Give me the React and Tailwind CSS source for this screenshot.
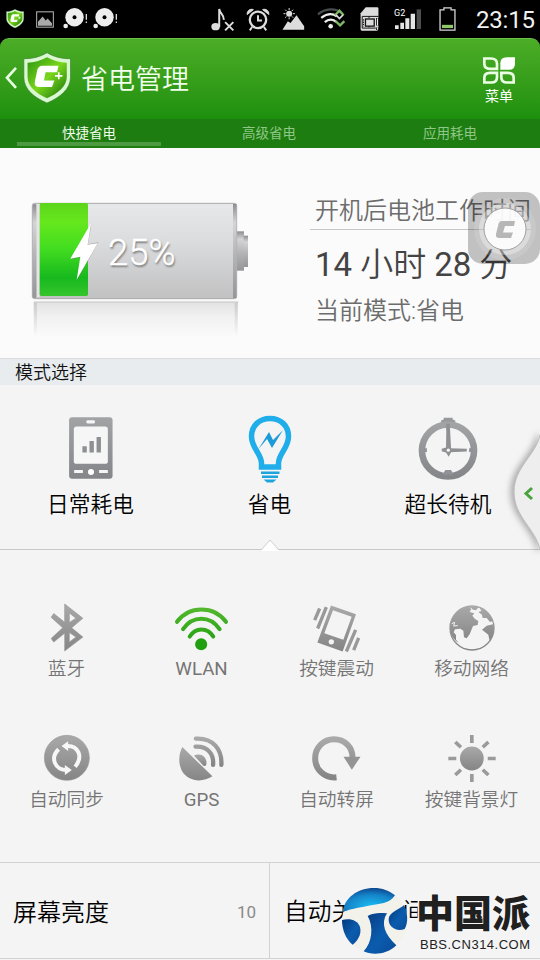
const cjk = "font-['Roboto','Noto_Sans_CJK_SC',sans-serif]";
const thin = "font-['Roboto','Noto_Sans_CJK_SC_DemiLight','Noto_Sans_CJK_SC_Light','Noto_Sans_CJK_SC',sans-serif] font-[350]";

// Every drawing keeps its own viewBox; size and spacing come from classes.
function Art({ box, className, children }) {
  return (
    <svg viewBox={box} className={`block shrink-0 overflow-visible ${className}`} fill="none">
      {children}
    </svg>
  );
}

function Gradients() {
  return (
    <svg className="absolute h-0 w-0">
      <defs>
        <linearGradient id="gray" x1="0" y1="0" x2="0" y2="1">
          <stop offset="0" stopColor="#a9a9a9" />
          <stop offset="1" stopColor="#858585" />
        </linearGradient>
        <linearGradient id="steel" x1="0" y1="0" x2="0" y2="1">
          <stop offset="0" stopColor="#a2a3a5" />
          <stop offset="1" stopColor="#85868a" />
        </linearGradient>
        <linearGradient id="shield" x1="0" y1="0" x2="1" y2="1">
          <stop offset="0" stopColor="#2c9410" />
          <stop offset="0.5" stopColor="#7ad61c" />
          <stop offset="1" stopColor="#146f0c" />
        </linearGradient>
        <linearGradient id="charge" x1="0" y1="0" x2="0" y2="1">
          <stop offset="0" stopColor="#5bd41a" />
          <stop offset="0.2" stopColor="#66e81d" />
          <stop offset="0.5" stopColor="#41dc20" />
          <stop offset="0.8" stopColor="#17b91e" />
          <stop offset="1" stopColor="#35c52c" />
        </linearGradient>
        <linearGradient id="case" x1="0" y1="0" x2="0" y2="1">
          <stop offset="0" stopColor="#e6e8ea" />
          <stop offset="0.4" stopColor="#dbdcde" />
          <stop offset="1" stopColor="#c1c1c1" />
        </linearGradient>
        <linearGradient id="rim" x1="0" y1="0" x2="0" y2="1">
          <stop offset="0" stopColor="#8e8c92" />
          <stop offset="0.2" stopColor="#d4d4d6" />
          <stop offset="0.55" stopColor="#b4b3b6" />
          <stop offset="1" stopColor="#969599" />
        </linearGradient>
        <linearGradient id="mirror" x1="0" y1="0" x2="0" y2="1">
          <stop offset="0" stopColor="#e2e2e2" />
          <stop offset="0.4" stopColor="#f1f1f1" />
          <stop offset="1" stopColor="#fbfbfb" />
        </linearGradient>
        <linearGradient id="edge" x1="0" y1="0" x2="0" y2="1">
          <stop offset="0" stopColor="#bdbdbd" stopOpacity="0.6" />
          <stop offset="1" stopColor="#bdbdbd" stopOpacity="0" />
        </linearGradient>
        <linearGradient id="wlan" gradientUnits="userSpaceOnUse" x1="0" y1="80" x2="0" y2="190">
          <stop offset="0" stopColor="#56b92f" />
          <stop offset="1" stopColor="#20a010" />
        </linearGradient>
        <radialGradient id="sky" cx="0.55" cy="0.75" r="0.8">
          <stop offset="0" stopColor="#19bdf2" />
          <stop offset="0.6" stopColor="#1583c8" />
          <stop offset="1" stopColor="#0a3d85" />
        </radialGradient>
        <linearGradient id="sea" x1="0" y1="0" x2="1" y2="1">
          <stop offset="0" stopColor="#06397e" />
          <stop offset="0.55" stopColor="#0b5cae" />
          <stop offset="1" stopColor="#0a4a98" />
        </linearGradient>
      </defs>
    </svg>
  );
}

function Shield({ className }) {
  return (
    <Art box="70 156 142 152" className={className}>
      <path d="M141 158C162 171 186 176 211 176V232C211 266 180 292 141 308C102 292 72 266 72 232V176C97 176 120 171 141 158Z" fill="#d9f8d1" stroke="#3c7f34" strokeWidth="2" />
      <path d="M141 172C160 183 180 187 200 188V230C200 258 174 280 141 294C108 280 83 258 83 230V188C103 187 122 183 141 172Z" fill="url(#shield)" />
      <path d="M175 197H127C119 197 114 202 112 210L105 244C103 254 107 260 116 260H156L163 241H132L137 216H171Z" fill="#fff" />
      <path d="M176 216V237M165 227H187" stroke="#fff" strokeWidth="5" />
    </Art>
  );
}

function Disc({ className }) {
  return (
    <Art box="188 24 74 64" className={className}>
      <circle cx="222" cy="52" r="28" fill="#eee" />
      <circle cx="222" cy="52" r="6" fill="#000" />
      <circle cx="195" cy="79" r="7" fill="#eee" />
      <path d="M258 42V60M258 65V70" stroke="#ddd" strokeWidth="4" />
    </Art>
  );
}

function StatusBar() {
  return (
    <div className="flex h-[38px] items-start bg-black text-white">
      <Shield className="mt-[9px] ml-[6px] h-[19px] w-[18px]" />
      <Art box="108 32 54 50" className="mt-[11px] ml-[12px] h-[17px] w-[18px]">
        <rect x="110" y="34" width="50" height="46" stroke="#b9b9b9" strokeWidth="3" />
        <path d="M114 76V64L128 48L137 60L143 54L156 68V76Z" fill="#aaa" />
      </Art>
      <Disc className="mt-[8px] ml-[9px] h-[21px] w-[25px]" />
      <Disc className="mt-[8px] ml-[5px] h-[21px] w-[25px]" />
      <Art box="634 24 70 70" className="mt-[8px] ml-[93px] h-[23px] w-[23px]">
        <ellipse cx="648" cy="81" rx="13" ry="11" fill="#ddd" />
        <path d="M659 82V27C661 43 674 43 673 60" stroke="#ddd" strokeWidth="6" />
        <path d="M677 67L702 92M702 67L677 92" stroke="#ddd" strokeWidth="6" />
      </Art>
      <Art box="740 24 72 70" className="mt-[8px] ml-[12px] h-[23px] w-[24px]">
        <circle cx="776" cy="60" r="25" stroke="#ddd" strokeWidth="7" />
        <path d="M776 46V62H788M758 82L751 92M794 82L801 92" stroke="#ddd" strokeWidth="6" />
        <path d="M743 44C742 32 753 25 762 29ZM809 44C810 32 799 25 790 29Z" fill="#ddd" stroke="#ddd" strokeWidth="3" />
      </Art>
      <Art box="40 25 68 66" className="mt-[8px] ml-[12px] h-[22px] w-[23px]">
        <path d="M41 90L57 65L65 70L83 47L106 80V90Z" fill="#ddd" />
        <circle cx="61" cy="42" r="9" fill="#ddd" />
        <path d="M61 25V31M61 53V59M44 42H50M72 42H78M49 30L53 34M73 30L69 34M49 54L53 50M73 54L69 50" stroke="#ddd" strokeWidth="3" />
      </Art>
      <Art box="144 24 86 64" className="mt-[8px] ml-[12px] h-[21px] w-[28px]">
        <path d="M147 43C170 24 201 23 218 38" stroke="#4a4d4e" strokeWidth="7" />
        <path d="M157 54C175 40 192 40 205 49M168 67C180 56 194 57 203 67" stroke="#eee" strokeWidth="7" />
        <circle cx="186" cy="80" r="7" fill="#eee" />
        <path d="M199 46L213 32L226 46M201 64L215 77L228 64" stroke="#7fba68" strokeWidth="7" />
        <path d="M202 45L213 56L224 45" stroke="#ddd" strokeWidth="5" />
      </Art>
      <Art box="275 20 60 74" className="mt-[7px] ml-[15px] h-[24px] w-[20px]">
        <path d="M292 21H327Q331 21 331 25V88Q331 93 326 93H280Q276 93 276 88V39Z" fill="#ddd" />
        <path d="M281 49H332M281 49V85H323" stroke="#111" strokeWidth="3" />
        <rect x="291" y="57" width="27" height="22" fill="#ddd" stroke="#111" strokeWidth="4" />
        <path d="M285 58V80M302 50V56M302 79V86" stroke="#111" strokeWidth="3" strokeDasharray="4 3" />
        <path d="M328 54V77M328 83V91" stroke="#000" strokeWidth="9" />
        <path d="M328 55V77M328 83V90" stroke="#eee" strokeWidth="4" />
      </Art>
      <div className="relative ml-[14px] h-[38px] w-[28px] shrink-0">
        <Art box="378 26 84 60" className="mt-[9px] h-[20px] w-[28px]">
          <path d="M381 75H392V86H381ZM397 67H408V86H397ZM412 54H424V86H412ZM428 40H441V86H428Z" fill="#e5e5e5" />
          <path d="M446 27H459V86H446Z" fill="#4d4d4d" />
        </Art>
        <span className="absolute top-[8px] left-0 font-['Roboto',sans-serif] text-[9px] leading-[11px]">G2</span>
      </div>
      <Art box="512 20 52 74" className="mt-[7px] ml-[17px] h-[24px] w-[17px]">
        <path d="M515 29H527V23H549V29H561V91H515Z" stroke="#d5d5d5" strokeWidth="4" />
        <path d="M521 75H555V85H521Z" fill="#8fc866" />
      </Art>
      <span className="mt-[5px] ml-[20px] w-[62px] font-['Roboto',sans-serif] text-[24px] leading-[30px] tracking-[-0.2px] whitespace-nowrap text-[#f1f1f1]">
        23:15
      </span>
    </div>
  );
}

function Header() {
  return (
    <div className="bg-black">
      <div className="flex h-[81px] rounded-t-[9px] border-t border-[#6bbd4c] bg-linear-to-b from-[#4cad27] to-[#1c900d]">
        <Art box="16 200 36 62" className="mt-[28px] ml-[5px] h-[21px] w-[12px]">
          <path d="M49 202L22 232L49 262" stroke="#e9ffe3" strokeWidth="8" />
        </Art>
        <Shield className="mt-[13px] ml-[6px] h-[51px] w-[48px]" />
        <h1 className={`${thin} mt-[21px] ml-[10px] text-[27px] leading-[40px] text-[#f1ffec]`}>省电管理</h1>
        <div className="mt-[18px] mr-[24px] ml-auto flex w-[34px] flex-col items-center">
          <Art box="641 170 96 80" className="h-[27px] w-[32px]">
            <g stroke="#eaffe4" strokeWidth="8">
              <path d="M645 174H665Q683 174 683 190V205H662Q645 205 645 190Z" />
              <path d="M683 217V230Q683 246 666 246H645V232Q645 217 662 217Z" />
              <path d="M696 217H716Q733 217 733 232V246H713Q696 246 696 230Z" />
            </g>
            <path d="M712 170H737V190Q737 208 719 208H693V188Q693 170 712 170Z" fill="#fff" />
          </Art>
          <span className={`${cjk} mt-[2px] text-[14px] leading-[20px] whitespace-nowrap text-white`}>菜单</span>
        </div>
      </div>
      <div className={`${cjk} grid h-[29px] grid-cols-[178px_182px_180px] bg-[#1d7d10] text-center text-[13.5px] leading-[28px] text-[#8fc787]`}>
        <div className="flex flex-col items-center text-[#effbeb]">
          <span className="h-[23px]">快捷省电</span>
          <span className="h-1 w-[144px] bg-[#4d9a43]" />
        </div>
        <span>高级省电</span>
        <span>应用耗电</span>
      </div>
    </div>
  );
}

function Battery() {
  return (
    <div className="relative mt-[54px] ml-[32px] h-[150px] w-[217px] shrink-0">
      <Art box="96 66 651 450" className="h-[150px] w-[217px]">
        <rect x="100" y="366" width="614" height="108" fill="url(#mirror)" />
        <path d="M102 366H715" stroke="#c4c4c4" strokeWidth="3" />
        <rect x="102" y="368" width="9" height="100" fill="url(#edge)" />
        <rect x="704" y="368" width="9" height="100" fill="url(#edge)" />
        <rect x="710" y="154" width="22" height="118" fill="url(#rim)" />
        <rect x="731" y="167" width="13" height="94" fill="url(#rim)" />
        <rect x="97" y="70" width="613" height="286" rx="7" fill="url(#case)" stroke="#aaaaac" strokeWidth="3" />
        <rect x="98" y="72" width="12" height="282" rx="5" fill="url(#rim)" />
        <rect x="110" y="74" width="9" height="278" fill="#e7e3e7" />
        <rect x="699" y="72" width="10" height="282" fill="url(#rim)" />
        <rect x="119" y="69" width="145" height="279" rx="5" fill="url(#charge)" />
        <path d="M274 133L214 239L242 232L231 302L295 187L264 193Z" fill="#777" opacity="0.5" />
        <path d="M273 130L211 236L241 230L230 299L293 190L263 194Z" fill="#fff" />
      </Art>
      <span className="absolute top-[27px] left-[76px] font-['Roboto',sans-serif] text-[36.500px] leading-[48px] font-light text-white [text-shadow:1px_2px_2px_#777] [-webkit-text-stroke:0.4px_white]">
        25%
      </span>
    </div>
  );
}

function FloatingButton() {
  return (
    <div className="absolute top-[44px] right-0 h-[72px] w-[72px] rounded-[15px] bg-black/23">
      <Art box="0 0 72 72" className="h-[72px] w-[72px]">
        <circle cx="37" cy="37" r="31" fill="#fff" opacity="0.12" />
        <circle cx="37" cy="37" r="26" fill="#fff" opacity="0.35" />
        <circle cx="37" cy="37" r="21" fill="#fff" opacity="0.9" stroke="#999" />
        <path d="M47 29H34Q31 29 30.500 32L28 42Q27.500 46 31 46H43L45 40.500H35L37 34H46Z" fill="#b7b7b7" />
      </Art>
    </div>
  );
}

function Summary() {
  return (
    <section className="relative flex h-[211px] border-b border-[#dcdcdc] bg-[#fbfbfb]">
      <Battery />
      <div className={`${thin} mt-[44px] ml-[61px] whitespace-nowrap text-[#6c6c6c]`}>
        <p className="h-[38px] border-b border-[#c6c6c6] pl-[5px] text-[24px] leading-[38px]">开机后电池工作时间</p>
        <p className="mt-[12px] pl-[5px] text-[33px] leading-[46px] text-[#444]">
          <span className="font-normal">14</span> 小时 <span className="font-normal">28</span> 分
        </p>
        <p className="mt-[7px] pl-[5px] text-[24px] leading-[33px]">当前模式:省电</p>
      </div>
      <FloatingButton />
    </section>
  );
}

function PhoneIcon() {
  return (
    <Art box="205 203 130 184" className="mt-[32px] h-[62px] w-[44px]">
      <rect x="205" y="204" width="129" height="182" rx="9" fill="url(#steel)" />
      <rect x="219" y="231" width="101" height="111" rx="8" fill="#f6f6f6" />
      <rect x="256" y="213" width="26" height="9" rx="4" fill="#f6f6f6" />
      <path d="M251 290V308M272 274V308M293 262V308" stroke="#8e8f92" strokeWidth="13" />
      <circle cx="270" cy="366" r="9" fill="#fff" />
      <path d="M220 365H246M294 365H320" stroke="#f6f6f6" strokeWidth="9" />
    </Art>
  );
}

function BulbIcon() {
  return (
    <Art box="0 0 44 68" className="mt-[30px] h-[68px] w-[44px]">
      <path d="M13.500 52V48C13 38 3.500 33 3.500 21.500C3.500 10.500 11.500 3.500 22 3.500S40.500 10.500 40.500 21.500C40.500 33 31 38 30.500 48V52Z" stroke="#1faee9" strokeWidth="5.500" />
      <path d="M13 56.500H31.500V59H13ZM14 60.500H30V63H14ZM15.500 64.500H28.500L25 67.500H19Z" fill="#1ea4dd" />
      <path d="M10.500 34L21 17L25 25L35 15L24 33L19 24Z" fill="#1c9bd8" />
    </Art>
  );
}

function ClockIcon() {
  return (
    <Art box="444 200 182 190" className="mt-[32px] h-[63px] w-[60px]">
      <path d="M514 224V210L522 207V202H549V207L557 210V224Z" fill="#97989b" />
      <circle cx="535" cy="301" r="79" stroke="url(#steel)" strokeWidth="20" />
      <path d="M535 220V240M462 300H471M599 300H610M525 374L530 366H541L546 374" stroke="#919296" strokeWidth="11" />
      <path d="M530 233H541L544 290L544 307L537 320L529 307L516 303V296L529 292Z" fill="#8f9094" />
      <path d="M540 294L592 296V304L540 306Z" fill="#8f9094" />
      <circle cx="536" cy="300" r="5" fill="#f4f4f4" />
    </Art>
  );
}

function Modes() {
  const modes = [
    { name: "日常耗电", icon: <PhoneIcon /> },
    { name: "省电", icon: <BulbIcon /> },
    { name: "超长待机", icon: <ClockIcon /> },
  ];
  return (
    <section className="relative h-[191px]">
      <h2 className={`${thin} h-[26px] bg-[#e8ecef] pl-[15px] text-[18px] leading-[28px] text-[#111]`}>模式选择</h2>
      <div className="grid h-[165px] grid-cols-[181px_177px_180px] border-b border-[#c9c9c9]">
        {modes.map((m) => (
          <div key={m.name} className="flex flex-col items-center">
            <div className="h-[102px]">{m.icon}</div>
            <span className={`${thin} text-[21.700px] leading-[35px] text-black`}>{m.name}</span>
          </div>
        ))}
      </div>
      <Art box="0 0 18 12" className="absolute top-[181px] left-[261px] h-[12px] w-[18px]">
        <path d="M0 11L9 0L18 11Z" fill="#fff" />
        <path d="M0 10L9 0L18 10" stroke="#d0d0d0" />
      </Art>
      <Art box="0 0 26 115" className="absolute top-[76px] right-0 h-[115px] w-[26px] [filter:drop-shadow(-3px_0_3px_rgba(0,0,0,0.3))]">
        <path d="M28 0H26C22 20 0 32 0 57S22 94 26 115H28Z" fill="#eeeeef" stroke="#bcbcbc" />
        <path d="M18 53L12 58.500L18 64" stroke="#48a33c" strokeWidth="3" />
      </Art>
    </section>
  );
}

function Toggles() {
  const g = "url(#gray)";
  const items = [
    {
      name: "蓝牙",
      icon: (
        <Art box="152 72 96 142" className="h-[47px] w-[32px]">
          <path fillRule="evenodd" d="M193 72L248 115L214 144L248 172L193 214V160L160 187L152 176L187 144L152 112L160 101L193 127ZM207 99V128L227 115ZM207 158V187L227 172Z" fill={g} stroke="#999" strokeWidth="2" />
        </Art>
      ),
    },
    {
      name: "WLAN",
      latin: true,
      icon: (
        <Art box="527 78 158 134" className="mt-[2px] h-[45px] w-[53px]">
          <path d="M533 125C569 76 643 76 679 125M551 147C580 106 631 106 660 147M571 169C588 141 624 141 641 169" stroke="url(#wlan)" strokeWidth="12" strokeLinecap="round" />
          <circle cx="605" cy="192" r="18" fill="#20a010" />
        </Art>
      ),
    },
    {
      name: "按键震动",
      icon: (
        <Art box="133 76 141 140" className="mt-[1px] h-[47px] w-[47px]">
          <path fillRule="evenodd" d="M187 77L262 103L222 215L146 188ZM193 91L167 160L224 180L249 111ZM188 178A8 8 0 1 0 188 194A8 8 0 1 0 188 178Z" fill={g} />
          <path d="M173 82L147 146M153 86L138 121M261 150L233 215M270 174L255 211" stroke="#999" strokeWidth="10" />
        </Art>
      ),
    },
    {
      name: "移动网络",
      icon: (
        <Art box="539 76 138 138" className="mt-[1px] h-[46px] w-[46px]">
          <circle cx="608" cy="145" r="66" stroke={g} strokeWidth="4" />
          <path d="M542 145C543 119 557 94 581 84L604 79L628 82L620 92L606 89L601 97L615 101L609 108L617 118L627 124L625 136L611 139L601 164L592 176L584 173L582 153L573 147L557 149L553 158L560 166V180L568 189C552 180 542 163 542 145Z" fill={g} />
          <path d="M630 83C651 91 665 106 671 124L662 127L652 115L640 115L638 105L627 97L636 94ZM674 133C676 151 671 169 661 184L657 165L638 150L652 138Z" fill={g} />
          <path d="M547 132L556 128L553 139L565 138M604 84L610 94M566 168L571 178" stroke="#f4f4f4" strokeWidth="3" />
        </Art>
      ),
    },
    {
      name: "自动同步",
      icon: (
        <Art box="132 467 139 139" className="h-[46px] w-[46px]">
          <circle cx="201" cy="536" r="68" fill={g} stroke="#999" strokeWidth="2" />
          <path d="M226 563C252 532 235 499 202 500M176 510C150 536 164 573 202 573" stroke="#f7f7f7" strokeWidth="12" />
          <path d="M205 486V515L185 500ZM195 558V588L216 573Z" fill="#f7f7f7" />
        </Art>
      ),
    },
    {
      name: "GPS",
      latin: true,
      icon: (
        <Art box="538 470 134 136" className="mt-[1px] h-[45px] w-[45px]">
          <path d="M547 503L638 592C606 613 564 607 546 576C534 552 536 525 547 503Z" fill={g} />
          <path d="M588 478C640 475 668 511 665 557M587 502C623 500 643 524 640 557" stroke={g} strokeWidth="13" strokeLinecap="round" />
          <path d="M582 529C600 520 621 529 620 554Q619 564 610 559Z" fill={g} />
        </Art>
      ),
    },
    {
      name: "自动转屏",
      icon: (
        <Art box="128 470 146 135" className="mt-[1px] h-[45px] w-[49px]">
          <path d="M201 594C166 598 137 571 137 537C137 504 163 480 193 480C226 480 250 504 249 536" stroke={g} strokeWidth="18" />
          <path d="M222 532H273L247 571Z" fill="#949494" />
        </Art>
      ),
    },
    {
      name: "按键背景灯",
      icon: (
        <Art box="533 466 143 142" className="h-[47px] w-[48px]">
          <circle cx="604" cy="537" r="36" fill={g} />
          <path d="M604 466V490M604 584V608M533 537H557M652 537H676M554 487L571 503M637 571L654 587M554 587L571 571M637 503L654 487" stroke="#9a9a9a" strokeWidth="11" />
        </Art>
      ),
    },
  ];
  return (
    <section className="h-[312px] pt-[54px]">
      <div className="mr-[1px] ml-[-1px] grid grid-cols-4 gap-y-[37px]">
        {items.map((t) => (
          <div key={t.name} className="flex h-[94px] flex-col items-center">
            <div className="h-[51px]">{t.icon}</div>
            <span className={`${t.latin ? cjk : thin} text-[18.700px] leading-[28px] whitespace-nowrap text-[#757575]`}>{t.name}</span>
          </div>
        ))}
      </div>
    </section>
  );
}

function BottomRows() {
  return (
    <section className={`${thin} grid h-[97px] grid-cols-2 border-y border-[#d2d2d2] text-[24px] text-black`}>
      <div className="flex items-center justify-between border-r border-[#d2d2d2] pt-[5px] pr-[13px] pl-[13px]">
        <span>屏幕亮度</span>
        <span className="text-[17px] font-normal text-[#8a8a8a]">10</span>
      </div>
      <div className="flex items-center pt-[5px] pl-[14px]">
        <span className="text-[23.700px] whitespace-nowrap">自动关屏时间</span>
      </div>
    </section>
  );
}

function Watermark() {
  return (
    <div className="absolute top-[886px] left-[340px] flex h-[70px] w-[200px]">
      <Art box="210 108 207 207" className="h-[69px] w-[69px]">
        <circle cx="314" cy="212" r="98" fill="#f2f2eb" />
        <path d="M218 187C222 145 262 114 312 114C337 114 358 122 375 136C359 162 330 160 289 169C258 174 236 179 218 187Z" fill="url(#sky)" />
        <path d="M216 210C240 204 263 210 270 231C276 253 262 274 248 284C227 268 216 238 216 210Z" fill="url(#sea)" />
        <path d="M293 198C311 187 332 188 351 190C331 220 345 255 379 286C346 318 302 314 281 304C306 278 312 231 293 198Z" fill="url(#sea)" />
        <path d="M402 166C414 190 415 219 404 237C378 246 355 231 356 207C358 187 383 181 402 166Z" fill="url(#sea)" />
      </Art>
      <div className="mt-[6px] ml-[7px] flex flex-col whitespace-nowrap">
        <span className="h-[45px] font-['Noto_Sans_CJK_SC',sans-serif] text-[38px] leading-[38px] font-black text-[#202020] [paint-order:stroke_fill] [-webkit-text-stroke:3px_#f6f6f6]">
          中国派
        </span>
        <span className="ml-[4px] font-['Liberation_Sans',Arial,sans-serif] text-[13px] leading-[15px] tracking-[0.5px] text-[#222] [paint-order:stroke_fill] [-webkit-text-stroke:2px_#f6f6f6]">
          BBS.CN314.COM
        </span>
      </div>
    </div>
  );
}

export default function App() {
  return (
    <main className="relative h-[960px] w-[540px] overflow-hidden bg-[#f4f4f4]">
      <Gradients />
      <StatusBar />
      <Header />
      <Summary />
      <Modes />
      <Toggles />
      <BottomRows />
      <Watermark />
    </main>
  );
}
